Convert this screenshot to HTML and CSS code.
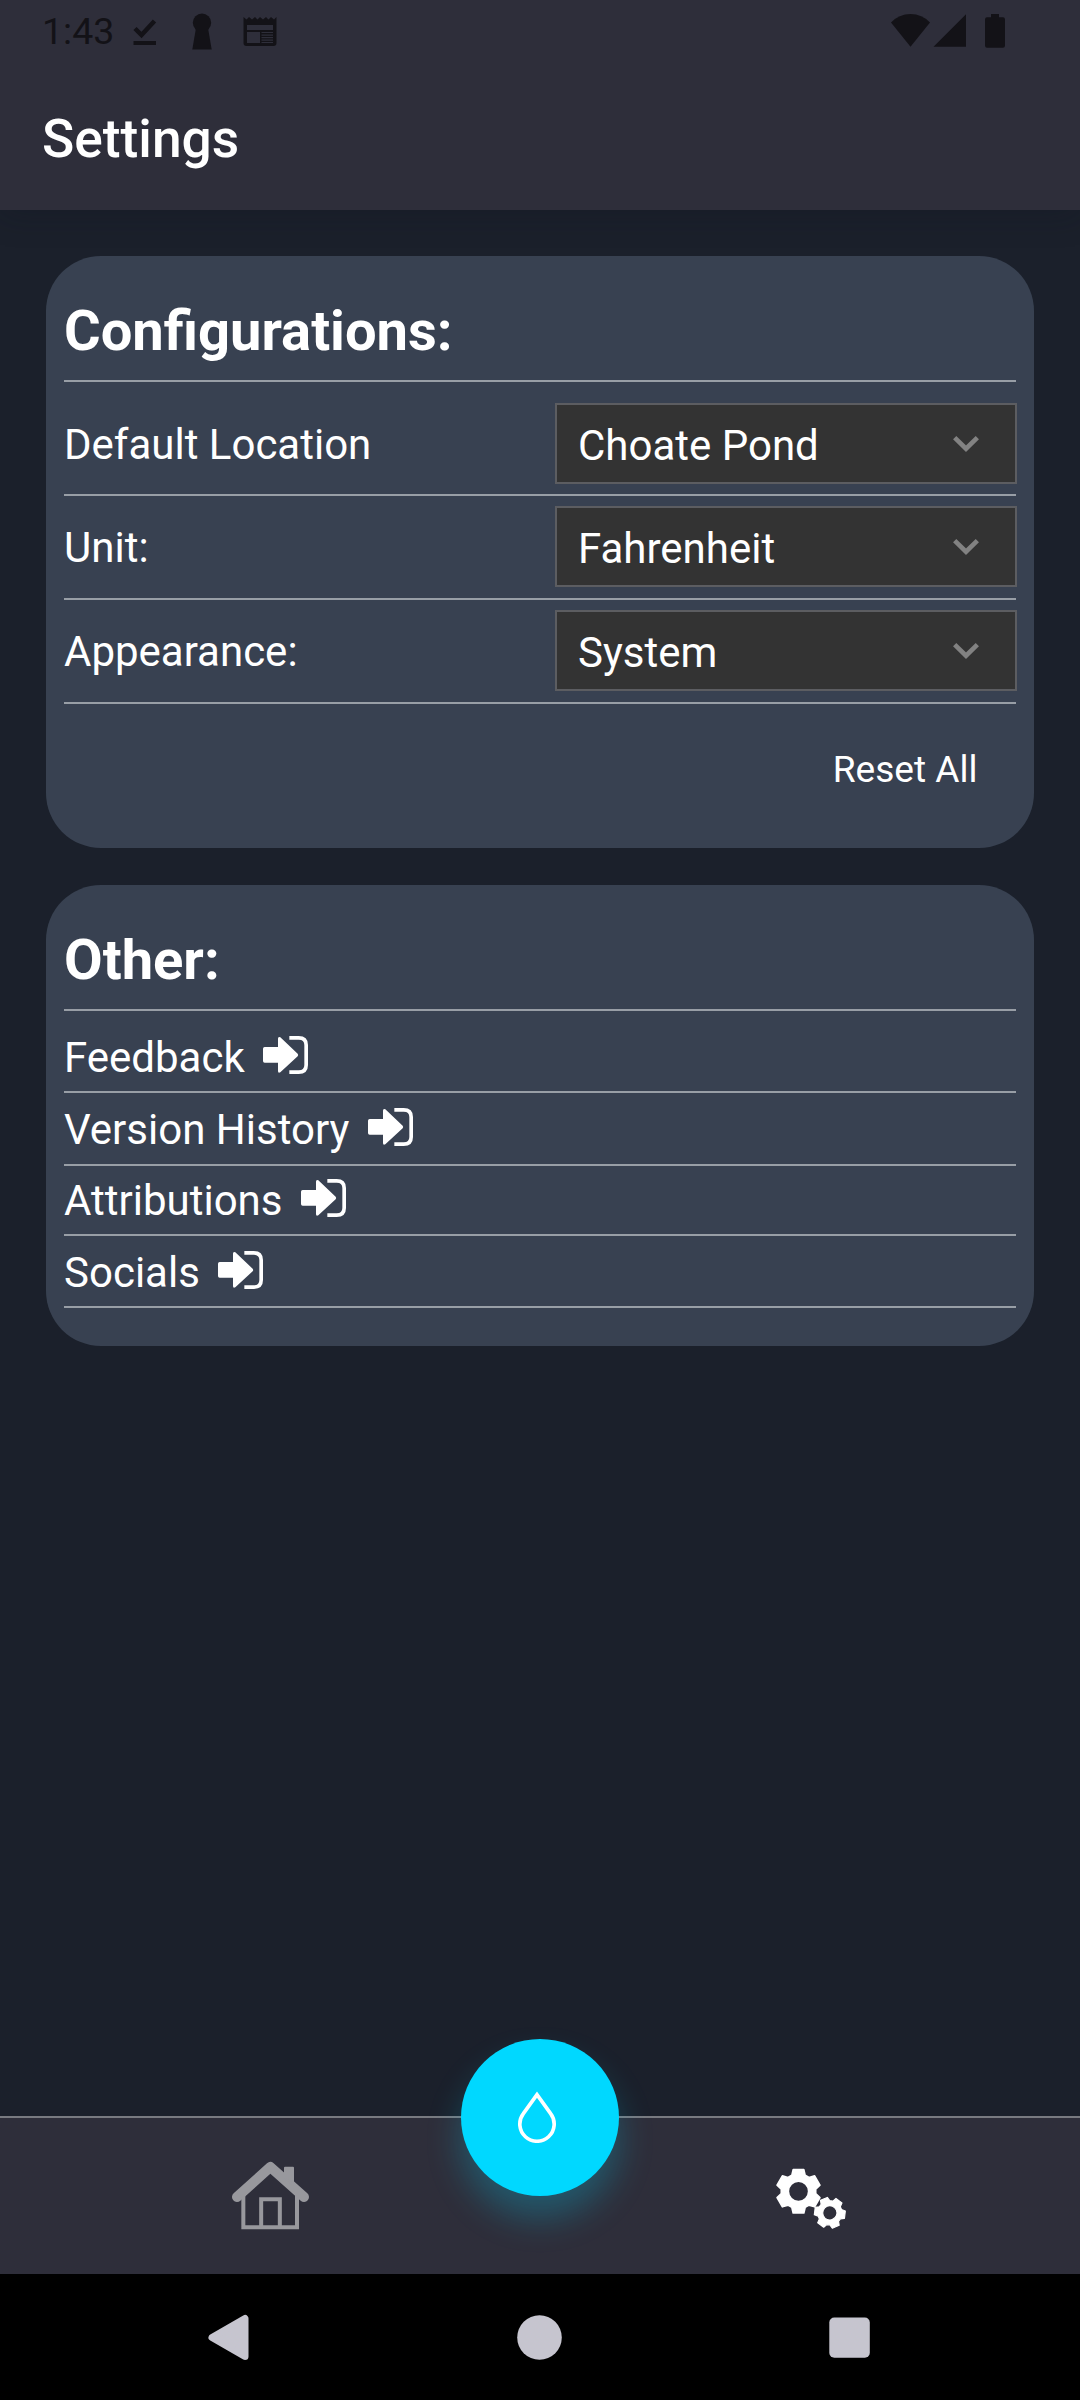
FILE: index.html
```html
<!DOCTYPE html>
<html lang="en">
<head>
<meta charset="utf-8">
<title>Settings</title>
<link rel="stylesheet" href="styles.css">
</head>
<body>
<svg class="defs" width="0" height="0">
  <symbol id="enter" viewBox="0 0 135 114">
    <path d="M5 33H45V8Q45 1 52 4L104 53Q107 57 104 61L52 109Q45 113 45 105V80H5Q0 80 0 75V38Q0 33 5 33Z" fill="#fff"/>
    <path d="M79 5.500H107Q129.500 5.500 129.500 27V87Q129.500 108.500 107 108.500H79" fill="none" stroke="#fff" stroke-width="11"/>
  </symbol>
  <symbol id="chevron" viewBox="0 0 78 48">
    <path d="M5 5L39 38L73 5" fill="none" stroke="#828282" stroke-width="14"/>
  </symbol>
  <symbol id="gear" viewBox="-70 -70 140 140" overflow="visible">
    <path fill-rule="evenodd" stroke="#fff" stroke-width="5" stroke-linejoin="round" fill="#fff" d="M-20-48L-16-65H16L20-48L31.600-41.300L48.300-46.400L64.300-18.600L51.600-6.700V6.700L64.300 18.600L48.300 46.400L31.600 41.300L20 48L16 65H-16L-20 48L-31.600 41.300L-48.300 46.400L-64.300 18.600L-51.600 6.700V-6.700L-64.300-18.600L-48.300-46.400L-31.600-41.300ZM0-30.500A30.500 30.500 0 1 0 0 30.500A30.500 30.500 0 1 0 0-30.500Z"/>
  </symbol>
</svg>
<div class="screen">
  <header class="header">
    <div class="status">
      <span class="clock">1:43</span>
      <svg class="done" width="24" height="60" viewBox="132.500 0 24 60"><path d="M134.500 28.500L141 35L154 21" fill="none" stroke="#131217" stroke-width="4.500"/><path d="M133 41H155.500V45H133Z" fill="#131217"/></svg>
      <svg class="keyhole" width="20" height="60" viewBox="192 0 20 60"><circle cx="202" cy="22.700" r="9.200" fill="#131217"/><path d="M196 28H208L211.700 49.500H192.300Z" fill="#131217"/></svg>
      <svg class="news" width="34" height="60" viewBox="243 0 34 60"><path fill-rule="evenodd" fill="#131217" d="M243.500 17L246.500 19.500L249 17L252 19.500L255 17L257.500 19.500L260 17L263 19.500L266 17L268.500 19.500L271 17L274 19.500L276.500 17V43Q276.500 46 273.500 46H246.500Q243.500 46 243.500 43ZM247 25V30H273V25ZM247 32V43H260V32ZM261.500 32V33H273V32ZM261.500 34.500V35.800H273V34.500ZM261.500 37V38.300H273V37ZM261.500 39.500V40.800H273V39.500ZM261.500 42V43H273V42Z"/></svg>
      <svg class="signals" width="115" height="60" viewBox="891 0 115 60"><g fill="#131217"><path d="M891 22.500Q899 14 910.500 14T930 22.500L910.500 46.700Z"/><path d="M933.500 46.700L966 14.300V46.700Z"/><path d="M991 14H999V17.300H1003Q1005 17.300 1005 19.500V45.500Q1005 47.700 1003 47.700H987Q985 47.700 985 45.500V19.500Q985 17.300 987 17.300H991Z"/></g></svg>
    </div>
    <h1 class="page-title">Settings</h1>
  </header>
  <main class="content">
    <section class="card">
      <h2 class="card-title">Configurations:</h2>
      <div class="setting first"><span class="label">Default Location</span><div class="select"><span>Choate Pond</span><svg class="chevron"><use href="#chevron"/></svg></div></div>
      <div class="setting"><span class="label">Unit:</span><div class="select"><span>Fahrenheit</span><svg class="chevron"><use href="#chevron"/></svg></div></div>
      <div class="setting"><span class="label">Appearance:</span><div class="select"><span>System</span><svg class="chevron"><use href="#chevron"/></svg></div></div>
      <div class="reset">Reset All</div>
    </section>
    <section class="card other">
      <h2 class="card-title">Other:</h2>
      <div class="link feedback">Feedback<svg class="enter"><use href="#enter"/></svg></div>
      <div class="link history">Version History<svg class="enter"><use href="#enter"/></svg></div>
      <div class="link attributions">Attributions<svg class="enter"><use href="#enter"/></svg></div>
      <div class="link socials">Socials<svg class="enter"><use href="#enter"/></svg></div>
    </section>
  </main>
  <nav class="tabs">
    <div class="tab home"><svg width="120" height="120" viewBox="0 0 360 360"><g stroke="#98989d" fill="none"><path d="M81 201L181 111L282 201" stroke-width="30" stroke-linecap="round" stroke-linejoin="round"/><path d="M100 195V292H261V195" stroke-width="12"/><path d="M153.500 290V207.500H209.500V290" stroke-width="12"/><path d="M225 113H249V165L225 143Z" fill="#98989d" stroke-width="6" stroke-linejoin="round"/></g></svg></div>
    <div class="tab settings"><svg width="100" height="110" viewBox="0 0 300 330"><use href="#gear" x="-70" y="-70" width="140" height="140" transform="translate(115.500 154)"/><use href="#gear" x="-70" y="-70" width="140" height="140" transform="translate(209.500 218.500) rotate(-23) scale(.7)"/></svg></div>
    <div class="fab"><svg width="40" height="52" viewBox="291 273 120 156"><path d="M351 284L310 341A51.500 51.500 0 1 0 392 341Z" fill="none" stroke="#fff" stroke-width="11"/></svg></div>
  </nav>
  <div class="system-nav">
    <svg width="360" height="126" viewBox="0 2274 360 126"><path d="M212 2337.500L245 2318.500V2356.500Z" fill="#c6c5cf" stroke="#c6c5cf" stroke-width="7" stroke-linejoin="round"/></svg>
    <svg width="360" height="126" viewBox="360 2274 360 126"><circle cx="539.500" cy="2337.500" r="22.300" fill="#c6c5cf"/></svg>
    <svg width="360" height="126" viewBox="720 2274 360 126"><rect x="829.300" y="2317.600" width="40.500" height="40.200" rx="5" fill="#c6c5cf"/></svg>
  </div>
</div>
</body>
</html>
```
FILE: styles.css
```css
* { box-sizing: border-box; }
body { margin: 0; background: #1b202b; color: #fff; font-family: Roboto, sans-serif; }
svg { display: block; flex: none; }
.defs { position: absolute; }
.screen { width: 1080px; height: 2400px; display: flex; flex-direction: column; overflow: hidden; }

.header { height: 210px; background: #2e2e3a; box-shadow: 0 4px 30px rgba(10, 20, 30, .25); }
.status { display: flex; height: 60px; padding-left: 42px; color: #131217; }
.clock { width: 90.500px; font-size: 37.500px; line-height: 62px; }
.keyhole { margin-left: 35.500px; }
.news { margin-left: 31px; }
.signals { margin-left: auto; margin-right: 74px; }
.page-title { margin: 0; padding: 8px 42px 0; font-size: 53.300px; font-weight: 500; line-height: 142px; }

.content { flex: 1; padding: 46px 46px 0; display: flex; flex-direction: column; gap: 37px; }
.card { padding: 26px 18px 13px; border-radius: 55px; background: #384151; }
.card.other { padding-bottom: 38px; }
.card-title { margin: 0; font-size: 56.100px; font-weight: 700; line-height: 98px; border-bottom: 2px solid #989ea6; }

.setting { display: flex; justify-content: space-between; height: 104px; padding-top: 10px; border-bottom: 2px solid #989ea6; font-size: 42px; }
.setting.first { height: 114px; padding-top: 21px; }
.label { line-height: 83px; }
.select { display: flex; justify-content: space-between; width: 462px; height: 81px; margin-right: -1px; padding: 4px 36px 0 21px; border: 2px solid #5c5d61; background: #333; line-height: 73px; }
.chevron { width: 26px; height: 16px; margin-top: 27px; }
.reset { padding-right: 38.500px; font-size: 37.100px; line-height: 131px; text-align: right; }

.link { display: flex; align-items: center; gap: 18.500px; border-bottom: 2px solid #989ea6; font-size: 42px; line-height: 67px; }
.enter { width: 45px; height: 38px; margin-top: -5px; }
.feedback { padding-top: 13px; }
.history { padding-top: 2px; line-height: 69px; }
.attributions { padding-top: 1px; }
.socials { padding-top: 3px; }

.tabs { position: relative; display: flex; height: 158px; border-top: 2px solid #787a80; background: #2e2e3a; }
.tab { flex: 1; display: flex; justify-content: center; }
.home { padding-top: 12px; }
.settings { padding-top: 22px; }
.fab { position: absolute; left: 461px; top: -79px; display: flex; align-items: center; justify-content: center; width: 158px; height: 157px; padding: 0 6px 2px 0; border-radius: 50%; background: #00d8ff; box-shadow: 0 22px 34px rgba(0, 215, 255, .25); }
.system-nav { display: flex; height: 126px; background: #000; }
```
